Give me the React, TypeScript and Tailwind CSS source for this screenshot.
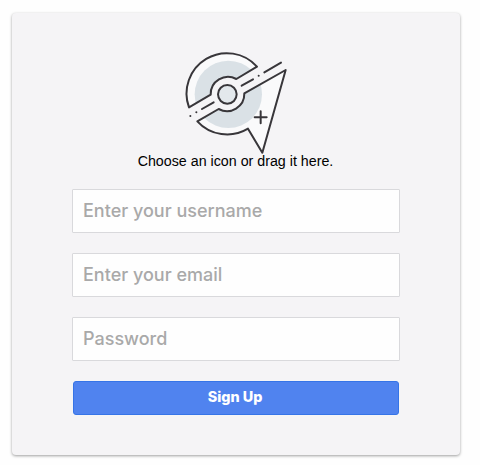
import React from "react";

const TOP = "M42 202A121 121 0 0 1 246 80L184 117A52 52 0 0 0 107 164Z";
const BOTTOM = "M332 90L208 160A52 52 0 0 1 131 207L67 244A121 121 0 0 0 219 266L262 338Z";

function CompassLogo() {
  return (
    <svg
      viewBox="0 0 360 360"
      className="mr-[2px] block h-[120px] w-[120px]"
      fill="none"
      stroke="#38363a"
      strokeWidth="6"
      strokeLinejoin="round"
      strokeLinecap="round"
    >
      <defs>
        <clipPath id="halves">
          <path d={TOP} />
          <path d={BOTTOM} />
        </clipPath>
      </defs>
      <path d={TOP} fill="#fafafb" stroke="none" />
      <path d={BOTTOM} fill="#fafafb" stroke="none" />
      <circle cx="160" cy="163" r="101" fill="#dae1e6" stroke="none" clipPath="url(#halves)" />
      <path d={TOP} />
      <path d={BOTTOM} />
      <circle cx="157" cy="163" r="28" fill="#e3e8ec" />
      <path d="M200 137L234 118M251 107h.1M268 97L318 68M46 228h.1M64 217h.1M81 207L116 187M257 214v36M239 232h36" />
    </svg>
  );
}

function Field({ type, placeholder }: { type: string; placeholder: string }) {
  return (
    <input
      type={type}
      placeholder={placeholder}
      className="block h-11 w-[328px] rounded-[1px] border border-[#d9d9dc] bg-[#fefefe] px-2.5 pb-0.5 font-['Inter','Liberation_Sans',sans-serif] text-[18px] font-medium outline-none placeholder:text-[#a9a9a9]"
    />
  );
}

export default function App() {
  return (
    <main className="h-[465px] w-[480px] overflow-hidden bg-[#fefefe] px-3 pt-[13px]">
      <form className="flex h-[442px] w-[448px] flex-col items-center rounded-[4px] bg-[#f5f4f6] pt-[27px] shadow-[0_1px_3px_rgba(0,0,0,0.38)]">
        <CompassLogo />
        <p className="-mt-2 mb-[18px] mr-px h-[19px] font-['Liberation_Sans',sans-serif] text-[14.25px] leading-[19px] text-black">
          Choose an icon or drag it here.
        </p>
        <div className="flex flex-col gap-5">
          <Field type="text" placeholder="Enter your username" />
          <Field type="email" placeholder="Enter your email" />
          <Field type="password" placeholder="Password" />
        </div>
        <button
          type="button"
          className="mt-5 h-[34px] w-[326px] rounded-[3px] border border-[#3674e7] bg-[#5083ef] pr-0.5 pb-0.5 font-['Inter','Liberation_Sans',sans-serif] text-[14.4px] font-extrabold text-white"
        >
          Sign Up
        </button>
      </form>
    </main>
  );
}
